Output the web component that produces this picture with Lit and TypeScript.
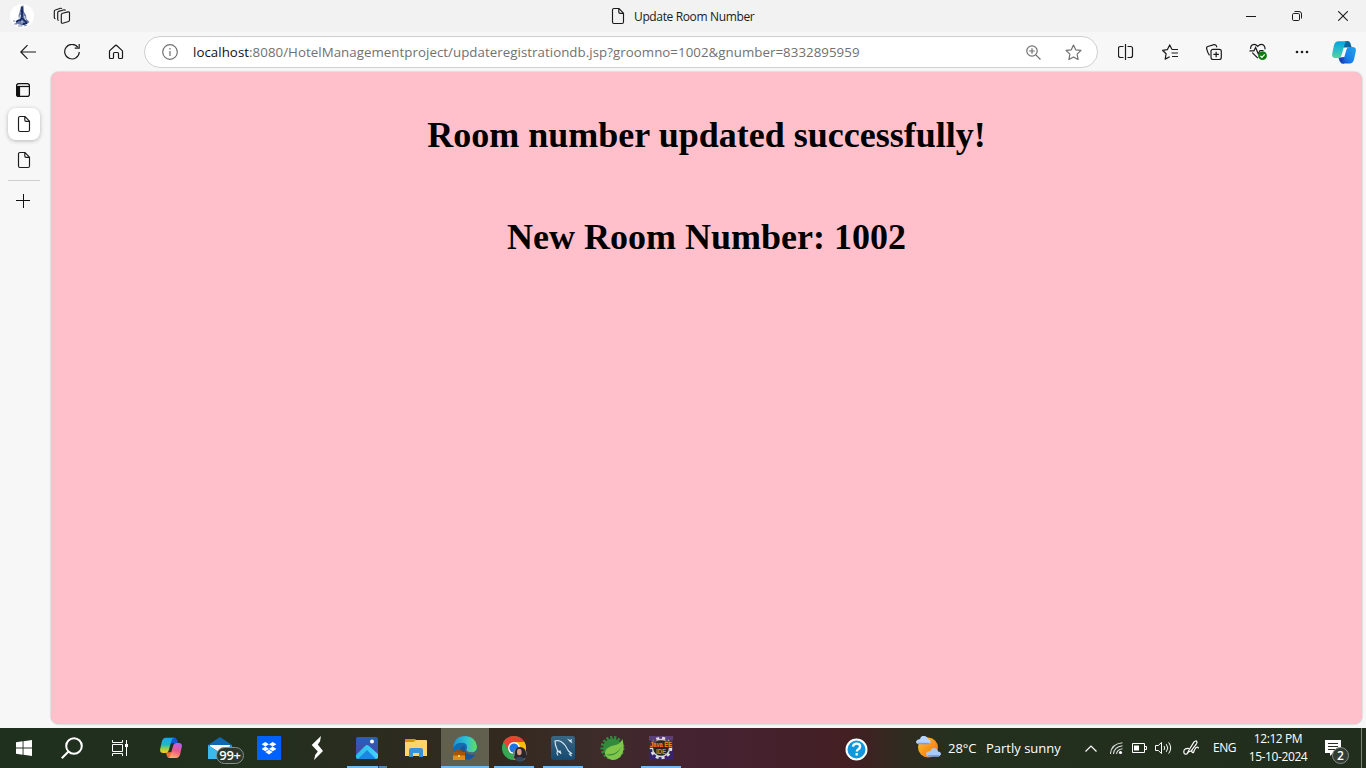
import { LitElement, html, css } from "lit";
import { customElement, property } from "lit/decorators.js";

const pageIcon = html`<svg width="16" height="18" viewBox="0 0 16 18" fill="none" stroke="#1b1b1b" stroke-width="1.15">
  <path d="M4 1.500h5l4.500 4.700v8.800a1.500 1.500 0 0 1-1.500 1.500H4A1.500 1.500 0 0 1 2.500 15V3A1.500 1.500 0 0 1 4 1.500zM8.800 1.700V5q0 1.300 1.300 1.300h3.200"/></svg>`;

@customElement("browser-titlebar")
class BrowserTitlebar extends LitElement {
  static styles = css`
    :host { display: flex; align-items: center; height: 32px; background: #f2f2f2; font: 12px "Open Sans", sans-serif; color: #1b1b1b; }
    svg { display: block; flex: none; }
    .left { display: flex; width: 610px; align-items: center; }
    .avatar { margin-left: 10px; }
    .spaces { margin-left: 19px; }
    .title { display: flex; align-items: center; flex: 1; gap: 8px; }
    .name { white-space: nowrap; letter-spacing: -0.36px; line-height: 16px; padding-top: 2px; }
    .controls { display: flex; }
    .control { width: 46px; height: 32px; display: flex; align-items: center; justify-content: center; }
  `;
  render() {
    return html`
      <div class="left">
        <svg class="avatar" width="24" height="24" viewBox="0 0 24 24"><circle cx="12" cy="12" r="12" fill="#fff"/>
          <path d="M11 2l2.500-.5L14 8l2 3 .5 4 3 3-2 1.500-5 2-3-1-4.500-.8 4-4.200-.5-4 1-3z" fill="#6c7ca5"/>
          <path d="M12 3v10M11 6l2 3M9.500 17l2.500-3 3 3 2 2M6 18l3-2M11 19l3 1 3-1" fill="none" stroke="#132564" stroke-width="1.700"/>
          <path d="M3 17h2M4 20h3M8 22h4M14 22l3-1" stroke="#7688b5"/>
          <path d="M10.500 11l-1 4M14.500 12l1 4M12 17v3" stroke="#d7deed" stroke-width="1"/></svg>
        <svg class="spaces" width="18" height="18" viewBox="0 0 18 18" fill="none" stroke="#1b1b1b" stroke-width="1.150" stroke-linejoin="round">
          <path d="M8.600 6.500l6.400-1.600q1.500-.3 1.500 1.200v7q0 1-1 1.400l-5.700 1.700q-1.500.3-1.500-1.200V7.600q0-.9 1.300-1.100M5.700 13.500q-1-.1-1-1.300V5.700q0-1 1-1.300l5.500-1.600q1 0 1.400.6M2.500 11.700q-1.200-.2-1.200-1.300V4.300q0-1 1-1.300L7.500 1.300q1-.2 1.500.4"/></svg>
      </div>
      <div class="title">${pageIcon}<span class="name">Update Room Number</span></div>
      <div class="controls">
        <div class="control"><svg width="10" height="10"><path d="M0 5.500h10" stroke="#1b1b1b"/></svg></div>
        <div class="control"><svg width="10" height="10" viewBox="0 0 10 10" fill="none" stroke="#1b1b1b"><rect x=".5" y="2.500" width="7" height="7" rx="1.200"/><path d="M2.500.5H7A2.500 2.500 0 0 1 9.500 3v4.500"/></svg></div>
        <div class="control"><svg width="10" height="10" viewBox="0 0 10 10" stroke="#1b1b1b" stroke-width="1.100"><path d="M.2.2l9.600 9.600M9.800.2L.2 9.800"/></svg></div>
      </div>`;
  }
}

@customElement("browser-toolbar")
class BrowserToolbar extends LitElement {
  static styles = css`
    :host { display: flex; align-items: center; height: 40px; padding-left: 6px; box-sizing: border-box; background: #f7f7f7; }
    svg { display: block; flex: none; fill: none; stroke: #1b1b1b; stroke-width: 1.2; }
    .btn { width: 44px; height: 40px; flex: none; display: flex; align-items: center; justify-content: center; }
    .copilot { width: 40px; }
    .address { width: 954px; height: 32px; margin: 0 6px; box-sizing: border-box; border: 1px solid #cfcfcf; border-radius: 16px; background: #fff; display: flex; align-items: center; padding-left: 17px; flex: none; }
    .address svg { stroke: #717171; }
    .url { flex: 1; margin-left: 15px; font: 13.3px/18px "Open Sans", sans-serif; letter-spacing: 0.04px; color: #717171; white-space: nowrap; }
    .host { color: #111; }
    .zoom { margin-right: 24px; }
    .star { margin-right: 15.5px; }
  `;
  render() {
    return html`
      <div class="btn"><svg width="16" height="16"><path d="M16 8H.8M7.500 1.200L.8 8l6.700 6.800"/></svg></div>
      <div class="btn"><svg width="16" height="16"><path d="M13.800 3.200A7.300 7.300 0 1 0 15.300 8M15.200 0v4.200h-4.500"/></svg></div>
      <div class="btn"><svg width="16" height="16"><path d="M1.500 6.900L7 1.700q1-.9 2 0l5.500 5.200v6.600q0 1-1 1h-2q-1 0-1-1v-4q0-1-1-1h-3q-1 0-1 1v4q0 1-1 1h-2q-1 0-1-1z"/></svg></div>
      <div class="address">
        <svg width="16" height="16"><circle cx="8" cy="8" r="7.300"/><path d="M8 7v5M8 4v1.500"/></svg>
        <span class="url"><span class="host">localhost</span>:8080/HotelManagementproject/updateregistrationdb.jsp?groomno=1002&amp;gnumber=8332895959</span>
        <svg class="zoom" width="15" height="15"><circle cx="6" cy="6" r="5.200"/><path d="M9.800 9.800l4.700 4.700M3.200 6h5.600M6 3.200v5.600"/></svg>
        <svg class="star" width="17" height="17"><path stroke-linejoin="round" d="M8.500 1l2.200 4.800 5.300.6-3.900 3.700 1 5.400-4.600-2.600-4.600 2.600 1-5.400L1 6.400l5.300-.6z"/></svg>
      </div>
      <div class="btn"><svg width="16" height="16"><path d="M5.500 2.500h-3q-2 0-2 2v7q0 2 2 2h3M9.500 2.500h3q2 0 2 2v7q0 2-2 2h-3M7.500 0v16"/></svg></div>
      <div class="btn"><svg width="16" height="16"><path stroke-linejoin="round" d="M10 5.500L7.700.9 5.400 5.600l-4.900.7 3.600 3.400-.9 5.400 4.500-2.400M10 5.500h6M9.500 9h6.500M10 12.500h6"/></svg></div>
      <div class="btn"><svg width="16" height="16"><rect x="5" y="5.300" width="10.300" height="10.300" rx="2"/><path d="M10.150 7.700v5.500M7.400 10.450h5.500M3.500 11.300q-1.600-2-2.200-4.500L.6 4.500Q.3 3 1.800 2.500L8 .7q1.700-.3 2.300 1.100l.6 1.500"/></svg></div>
      <div class="btn"><svg width="18" height="18" viewBox="0.5 0 18 18"><path d="M2.200 5.800Q1.800 3.500 3.600 2 6.500.2 9.200 3.300 12 .2 14.900 2q2 1.700 1.500 4.300M3.800 9.700l5.500 5.500M1 7.800h4.400l1.700-3.300 2.600 6.300 1.800-3.300H15"/><circle cx="14" cy="12.700" r="4.400" fill="#107c10" stroke="none"/><path d="M11.900 12.900l1.500 1.400 2.800-3" stroke="#fff"/></svg></div>
      <div class="btn"><svg width="14" height="4"><g fill="#1b1b1b" stroke="none"><circle cx="2" cy="2" r="1.300"/><circle cx="7" cy="2" r="1.300"/><circle cx="12" cy="2" r="1.300"/></g></svg></div>
      <div class="btn copilot"><svg width="24" height="23" viewBox="0 0 24 23">
        <defs>
          <linearGradient id="a" x1="0" y1="0" x2="0" y2="1"><stop stop-color="#06a3df"/><stop offset=".5" stop-color="#25bdcb"/><stop offset="1" stop-color="#58d39a"/></linearGradient>
          <linearGradient id="b" x1="1" y1="0" x2="0" y2="1"><stop stop-color="#1ba5ef"/><stop offset=".6" stop-color="#1b7fed"/><stop offset="1" stop-color="#1841bc"/></linearGradient>
        </defs>
        <g stroke="none"><path d="M13 0h2.500q2.200 0 2.900 2.300l1.300 4.100H11z" fill="#09659c"/>
        <path d="M6.500 16.500l1 3.600Q8.300 22.500 11 22.500h1l2-6.500z" fill="#1942bc"/>
        <path d="M6.500.2H15q-1.700.8-2.400 3.200l-3.200 11Q8.700 17 6 17H3.500Q-.6 16.900.2 12.700L2 4.300Q3 .3 6.500.2z" fill="url(#a)"/>
        <path d="M17.500 22.500H9q1.700-.8 2.400-3.200l3.200-11Q15.300 6 18 6h2.500q4.100 0 3.300 4.200L22 18.400q-1 4-4.500 4.100z" fill="url(#b)"/></g></svg></div>`;
  }
}

@customElement("tab-rail")
class TabRail extends LitElement {
  static styles = css`
    :host { display: flex; flex-direction: column; align-items: center; padding-right: 3px; box-sizing: border-box; width: 51px; flex: none; }
    svg { display: block; }
    .panel { height: 36px; display: flex; align-items: center; padding-right: 2px; }
    .tab { width: 32px; height: 32px; display: flex; align-items: center; justify-content: center; border-radius: 8px; }
    .active { background: #fff; box-shadow: 0 1px 4px #0004; }
    .idle { margin-top: 4px; }
    .rule { width: 32px; height: 1px; margin-top: 4px; background: #cecece; }
    .add { margin-top: 13px; padding-right: 2px; }
  `;
  render() {
    return html`
      <div class="panel"><svg width="14" height="14" fill="none" stroke="#111" stroke-width="1.200"><rect x=".6" y=".6" width="12.800" height="12.800" rx="2.200"/><path d="M1 3.500h12.500"/><path d="M1 3.500h2.500v9.900H2q-1.200-.3-1.200-1.300z" fill="#111"/></svg></div>
      <div class="tab active">${pageIcon}</div>
      <div class="tab idle">${pageIcon}</div>
      <div class="rule"></div>
      <svg class="add" width="14" height="14"><path d="M7.500 0v14M0 6.500h14" stroke="#111"/></svg>`;
  }
}

@customElement("result-page")
class ResultPage extends LitElement {
  static styles = css`
    :host { display: block; flex: 1; height: 652px; margin-right: 4px; border-radius: 8px; background: #ffc0cb; box-shadow: 0 0 2px #0005; text-align: center; }
    h1 { margin: 0; font: bold 36px/42px "Liberation Serif", serif; color: #000; }
    .status { padding-top: 42px; }
    .room { padding-top: 60px; }
  `;
  render() {
    return html`<h1 class="status">Room number updated successfully!</h1><h1 class="room">New Room Number: 1002</h1>`;
  }
}

const apps = [
  { state: "", art: html`<svg width="22" height="22" viewBox="0 0 24 23">
    <defs><linearGradient id="c" x1="0" y1="0" x2="0" y2="1"><stop stop-color="#1ba6f1"/><stop offset=".45" stop-color="#20b7c5"/><stop offset=".75" stop-color="#a7cf3a"/><stop offset="1" stop-color="#ffca23"/></linearGradient>
    <linearGradient id="d" x1=".7" y1="0" x2=".4" y2="1"><stop stop-color="#b363ee"/><stop offset=".5" stop-color="#ef578b"/><stop offset="1" stop-color="#ffad61"/></linearGradient></defs>
    <path d="M13 0h2.500q2.200 0 2.900 2.300l1.300 4.100H11z" fill="#1658d4"/><path d="M6.500 16.500l1 3.600Q8.300 22.500 11 22.500h1l2-6.500z" fill="#f36e38"/>
    <path d="M6.500.2H15q-1.700.8-2.400 3.200l-3.200 11Q8.700 17 6 17H3.500Q-.6 16.900.2 12.700L2 4.300Q3 .3 6.500.2z" fill="url(#c)"/>
    <path d="M17.500 22.500H9q1.700-.8 2.400-3.200l3.200-11Q15.300 6 18 6h2.500q4.100 0 3.300 4.200L22 18.400q-1 4-4.500 4.100z" fill="url(#d)"/></svg>` },
  { state: "", art: html`<div class="mail"><svg width="24" height="22"><path d="M0 8l12-8 12 8v14H0z" fill="#1268ae"/><path d="M2 8h20v8H2z" fill="#f6f6f6"/><path d="M0 8l12 7.500L24 8v14H0z" fill="#1f9ee5"/><path d="M0 22V8l19 14z" fill="#38b9ef"/></svg><span class="count">99+</span></div>` },
  { state: "", art: html`<svg width="24" height="24"><path d="M0 0h24v24H0z" fill="#0061fe"/><path d="M8.300 5.900l3.700 2.300-3.700 2.400-3.700-2.400zM15.700 5.900l3.700 2.300-3.700 2.400L12 8.200zM8.300 10.600l3.700 2.400-3.700 2.300L4.600 13zM15.700 10.600l3.700 2.400-3.700 2.300L12 13zM12 13.800l3.700 2.300-3.700 2.300-3.700-2.300z" fill="#fff"/></svg>` },
  { state: "", art: html`<svg width="14" height="24" viewBox="0.5 0 14 24"><path d="M10.500 0L9.500 5.500 7.300 8.500l5.200 6.500L3.500 24l1.300-5.300 2.500-3.200L1.200 9z" fill="#fff"/></svg>` },
  { state: "open grouped", art: html`<svg width="22" height="22"><defs><linearGradient id="e" x2="0" y2="1"><stop stop-color="#285fbb"/><stop offset="1" stop-color="#4f459f"/></linearGradient><linearGradient id="f" x2="1"><stop stop-color="#26bce9"/><stop offset="1" stop-color="#43d2fc"/></linearGradient></defs><rect width="22" height="22" rx="2" fill="url(#e)"/><path d="M0 18L9.500 8.500q1.500-1.200 3 0L22 17v3q0 2-2 2H2q-2 0-2-2z" fill="url(#f)"/><path d="M11 13l9 9H2z" fill="#1789de"/><circle cx="16" cy="4.500" r="2" fill="#fff"/></svg>` },
  { state: "", art: html`<svg width="22" height="20"><path d="M0 1h10l2 2h9q1 0 1 1v14H0z" fill="#e4a51b"/><path d="M0 4h9l2-2h10q1 0 1 1v15H0z" fill="#ffd56b"/><path d="M0 1h9v2L8 4H0z" fill="#d79307"/><path d="M4 19v-7q0-2 2-2h10q2 0 2 2v7h-4v-4H8v4z" fill="#3b91d7"/></svg>` },
  { state: "open current", art: html`<svg width="24" height="24"><defs><linearGradient id="g" x1="0" x2="1"><stop stop-color="#1a91d0"/><stop offset=".6" stop-color="#31c5cf"/><stop offset="1" stop-color="#66df52"/></linearGradient></defs><circle cx="12" cy="12" r="12" fill="#126cb4"/><path d="M0 11Q1.500 0 12.500 0 23 1 24 10.500q0 6-6.500 6-5.500 0-4-3Q15.500 7 9 6.800 3 6.600 0 12z" fill="url(#g)"/><path d="M9 10q-4 5-1 9 3 4 8 4.500 5-2 6.500-6-4 2-8 0-4-2-2-6-1-2-3.500-1.500z" fill="#17579f"/><path d="M13.500 12q-.8 2 .5 3 3.500 2.300 8 1.200 1.500-.5 1.800-1.400l1 .2-.3 3.500-2-.5q-4.500 1.500-8-.5-3-2-1-5.500z" fill="#646152"/><path d="M3.500 17v-2h5v2" fill="none" stroke="#9b5306" stroke-width="1.500"/><rect y="16" width="12" height="8" fill="#e08b1a"/><path d="M0 16h12v3.500H0z" fill="#a95508"/><path d="M5 19h2v2H5z" fill="#ffd253"/></svg>` },
  { state: "open", art: html`<svg class="chrome" width="25" height="26" viewBox="0 0 25 26"><circle cx="12" cy="12" r="12" fill="#35a853"/><path d="M1.600 6A12 12 0 0 1 22.400 6H12L7 15z" fill="#e94235"/><path d="M12 6h10.400A12 12 0 0 1 12 24l5.500-9z" fill="#fbbc04"/><circle cx="12" cy="12" r="6" fill="#fff"/><circle cx="12" cy="12" r="4.600" fill="#1a73e8"/><circle cx="17.800" cy="18.300" r="7" fill="#7b8080"/><path d="M12 22q1-3 1-6 .5-5 5-5 5 0 6 6l1 4-7 4z" fill="#2b242a"/><ellipse cx="17.300" cy="16" rx="2.300" ry="3.300" fill="#d49b83"/><path d="M12.500 23q5-4.500 10 0l-4 3q-4-1-6-3z" fill="#304760"/></svg>` },
  { state: "open", art: html`<svg width="24" height="24"><defs><linearGradient id="h" x2="0" y2="1"><stop stop-color="#386684"/><stop offset="1" stop-color="#164a70"/></linearGradient></defs><rect width="24" height="24" rx="2.500" fill="url(#h)"/><path d="M7 19.500l-1-2 .5-3L4.500 9l-.5-4 3-.5q6 1.500 9 8l1.500 2.500 3 2.500-2 .5 2 2M6.500 14l1.500 2 1-1 1 3" fill="none" stroke="#d8e7ef" stroke-width="1.150"/><path d="M16 2.500l3 1.500 2-1-.5 2 1 2.500-3-2z" fill="#d8e7ef"/></svg>` },
  { state: "", art: html`<svg width="25" height="25"><circle cx="12.500" cy="12" r="9.500" fill="#328b3c"/><circle cx="12.500" cy="12" r="10.500" fill="none" stroke="#328b3c" stroke-width="3" stroke-dasharray="2.300 1.600"/><path d="M22.500 3q2.500 11-1 16-5 7-12 4l-3-2q-3-4 0-8 3-3 9-4 5-1 7-6z" fill="#81c64a"/><path d="M6 18.500q10 1 16-8-5 10-14 9z" fill="#328b3c"/></svg>` },
  { state: "open", art: html`<svg width="24" height="24"><rect width="24" height="24" fill="#5b4078"/><path d="M0 12h24v12H0z" fill="#35236e"/><circle cx="12" cy="12" r="10" fill="none" stroke="#dedede" stroke-width="2.500" stroke-dasharray="3 3"/><circle cx="12" cy="12" r="8.500" fill="#292123" stroke="#d8d8d8" stroke-width="1.300"/><path d="M0 4.500h24V12H0z" fill="#39232b" opacity=".75"/><text x="1" y="11" textLength="22" lengthAdjust="spacingAndGlyphs" font-family="Liberation Sans" font-size="7" font-weight="bold" fill="#ff8219">Java EE</text><text x="7" y="18" textLength="10" lengthAdjust="spacingAndGlyphs" font-family="Liberation Sans" font-size="7" font-weight="bold" fill="#ff8219">IDE</text></svg>` },
];

@customElement("task-button")
class TaskButton extends LitElement {
  @property() state = "";
  @property({ attribute: false }) art: unknown;
  static styles = css`
    :host { display: block; width: 48px; flex: none; }
    svg { display: block; overflow: visible; }
    .body { display: flex; flex-direction: column; align-items: center; height: 40px; }
    .art { flex: 1; display: flex; align-items: center; justify-content: center; padding-top: 3px; }
    .line { width: 40px; height: 3px; flex: none; }
    .open .line { height: 2px; background: #76b9ed; }
    .open .art { padding-top: 2px; }
    .current { background: #615f4e; }
    .current .line { width: 48px; }
    .grouped .line { background: linear-gradient(90deg, #76b9ed 31px, #254467 31px, #254467 32px, #5485ad 32px); }
    .chrome { padding-left: 1px; padding-top: 2px; }
    .mail { position: relative; }
    .count { position: absolute; left: 8px; top: 10px; width: 26px; height: 15px; border: 1px solid #8a8e89; border-radius: 9px; background: #2c382e; color: #fff; font: 600 13px/15px "Open Sans", sans-serif; text-align: center; letter-spacing: -0.3px; }
  `;
  render() {
    return html`<div class="body ${this.state}"><div class="art">${this.art}</div><div class="line"></div></div>`;
  }
}

@customElement("task-bar")
class TaskBar extends LitElement {
  static styles = css`
    :host { display: flex; height: 40px; color: #fff; font: 13px/18px "Open Sans", sans-serif; background: linear-gradient(90deg, #20301e 0, #22301e 250px, #2c2b20 390px, #33291f 500px, #3c2c29 590px, #452330 680px, #45212e 760px, #431e22 850px, #302b20 900px, #24301e 960px, #212e1d 100%); }
    svg { display: block; flex: none; fill: none; stroke: #fff; stroke-width: 1.2; }
    .system { display: flex; width: 147px; flex: none; }
    .slot { width: 48px; height: 40px; display: flex; align-items: center; justify-content: center; }
    .apps { display: flex; gap: 1px; width: 698px; flex: none; }
    .tray { display: flex; align-items: center; height: 40px; white-space: nowrap; }
    .help { margin-top: 2px; }
    .weather { margin-left: 48px; }
    .temp { width: 38px; margin-left: 6px; letter-spacing: -0.05px; }
    .sky { width: 99px; letter-spacing: 0; }
    .wifi { margin-left: 13px; }
    .battery { margin-left: 9px; }
    .sound { margin-left: 8px; }
    .pen { margin-left: 11px; }
    .lang { margin-left: 14px; width: 24px; font-size: 12px; letter-spacing: -0.5px; }
    .clock { width: 64px; margin-left: 9px; text-align: center; font-size: 12px; letter-spacing: -0.4px; padding-bottom: 1px; }
    .note { position: relative; margin-left: 15px; }
    .badge { position: absolute; left: 7px; top: 7px; width: 15px; height: 15px; border: 1px solid #888c86; border-radius: 50%; background: #343d33; font: 600 12px/15px "Open Sans", sans-serif; text-align: center; }
    .edge { width: 1px; height: 40px; margin-left: 19px; background: #7b8379; }
  `;
  render() {
    return html`
      <div class="system">
        <div class="slot"><svg width="16" height="16"><path d="M0 2.200L6.600 1.300v6.200H0zM7.500 1.200L16 0v7.500H7.500zM0 8.500h6.600v6.200L0 13.800zM7.500 8.500H16V16l-8.500-1.200z" fill="#fff" stroke="none"/></svg></div>
        <div class="slot"><svg width="22" height="22"><circle cx="13" cy="9" r="7.800" stroke-width="2"/><path d="M7.500 14.500L.8 21.300" stroke-width="2"/></svg></div>
        <div class="slot"><svg width="16" height="16"><path stroke-width="1" d="M.5 0v2.500h10V0M.5 16v-2.500h10V16M.5 4.500h10v7H.5zM14.500 0v16"/><path d="M13 4h3v3h-3z" fill="#fff" stroke="none"/></svg></div>
      </div>
      <div class="apps">${apps.map(a => html`<task-button .state=${a.state} .art=${a.art}></task-button>`)}</div>
      <div class="tray">
        <svg class="help" width="23" height="23"><circle cx="11.500" cy="11.500" r="10" fill="#1198dc" stroke-width="2"/><path d="M8 8.700q.4-3 3.700-3 3.400 0 3.400 2.900 0 1.600-1.800 2.600-1.500.8-1.500 2.300M11.700 15v2.400" stroke-width="2.300"/></svg>
        <svg class="weather" width="26" height="24"><defs><linearGradient id="sun" x2="1" y2="1"><stop stop-color="#ffc328"/><stop offset="1" stop-color="#f06c17"/></linearGradient></defs><g stroke="none"><circle cx="12" cy="11.500" r="10" fill="url(#sun)"/><path d="M3 8Q0 8 0 5.500 1 3 4 3q1-4 5-3 3 1 3 3 4 1 2 4l-2 1z" fill="#b6d4fb"/><path d="M13 20.500q-3-.5-3-3 1-3 4-2 2-5 6-3 2 1 2 3 3 0 3 3l-2 2z" fill="#a9c9f8"/></g><path d="M2 7.500h11M12 19.800h11" stroke="#779ee6" stroke-width="1.400"/></svg>
        <span class="temp">28°C</span><span class="sky">Partly sunny</span>
        <svg width="12" height="7"><path d="M.5 6.500L6 1l5.500 5.500"/></svg>
        <svg class="wifi" width="13" height="13"><g opacity=".85" stroke-width="1.100"><path d="M.5 12Q1 2 12.500.8M3.500 12Q4 5 12.500 3.800M6.500 12Q7 7.500 12.500 6.800"/></g><circle cx="10.500" cy="10.500" r="1.600" fill="#fff" stroke="none"/></svg>
        <svg class="battery" width="15" height="10"><path d="M.5.5h12v9H.5zM12.500 3.500h2v3h-2" stroke-width="1"/><path d="M2 2.500h5v5H2z" fill="#fff" stroke="none"/></svg>
        <svg class="sound" width="17" height="14"><path stroke-width="1" d="M.5 4.500h2.800L6.500 1.500v11L3.300 9.500H.5zM9 5q1.500 2 0 4M11.300 3.200q3 3.800 0 7.600M13.700 1.400q4 5.600 0 11.200"/></svg>
        <svg class="pen" width="16" height="16"><path d="M6 10L11 2q2-1.700 2.700-.7t-.2 2.500L8 11l-3 1zM6 8.500Q1 8 .8 11.500q0 3.500 3 2.500 2-1.500 1.700-3M9 9.500q-.5 4 1.500 3 1-3 2.500-5 3-1 2 1"/></svg>
        <span class="lang">ENG</span>
        <div class="clock">12:12 PM<br>15-10-2024</div>
        <div class="note"><svg width="17" height="16"><path d="M0 0h16v13H8l-3 3v-3H0z" fill="#fff" stroke="none"/><path d="M3 3.500h10M3 6.500h10M3 9.500h7" stroke="#24311f"/></svg><span class="badge">2</span></div>
        <div class="edge"></div>
      </div>`;
  }
}

@customElement("app-root")
class AppRoot extends LitElement {
  static styles = css`
    :host { display: flex; flex-direction: column; width: 1366px; height: 768px; overflow: hidden; background: #f7f7f7; }
    .content { display: flex; height: 656px; }
  `;
  render() {
    return html`<browser-titlebar></browser-titlebar><browser-toolbar></browser-toolbar>
      <div class="content"><tab-rail></tab-rail><result-page></result-page></div><task-bar></task-bar>`;
  }
}
